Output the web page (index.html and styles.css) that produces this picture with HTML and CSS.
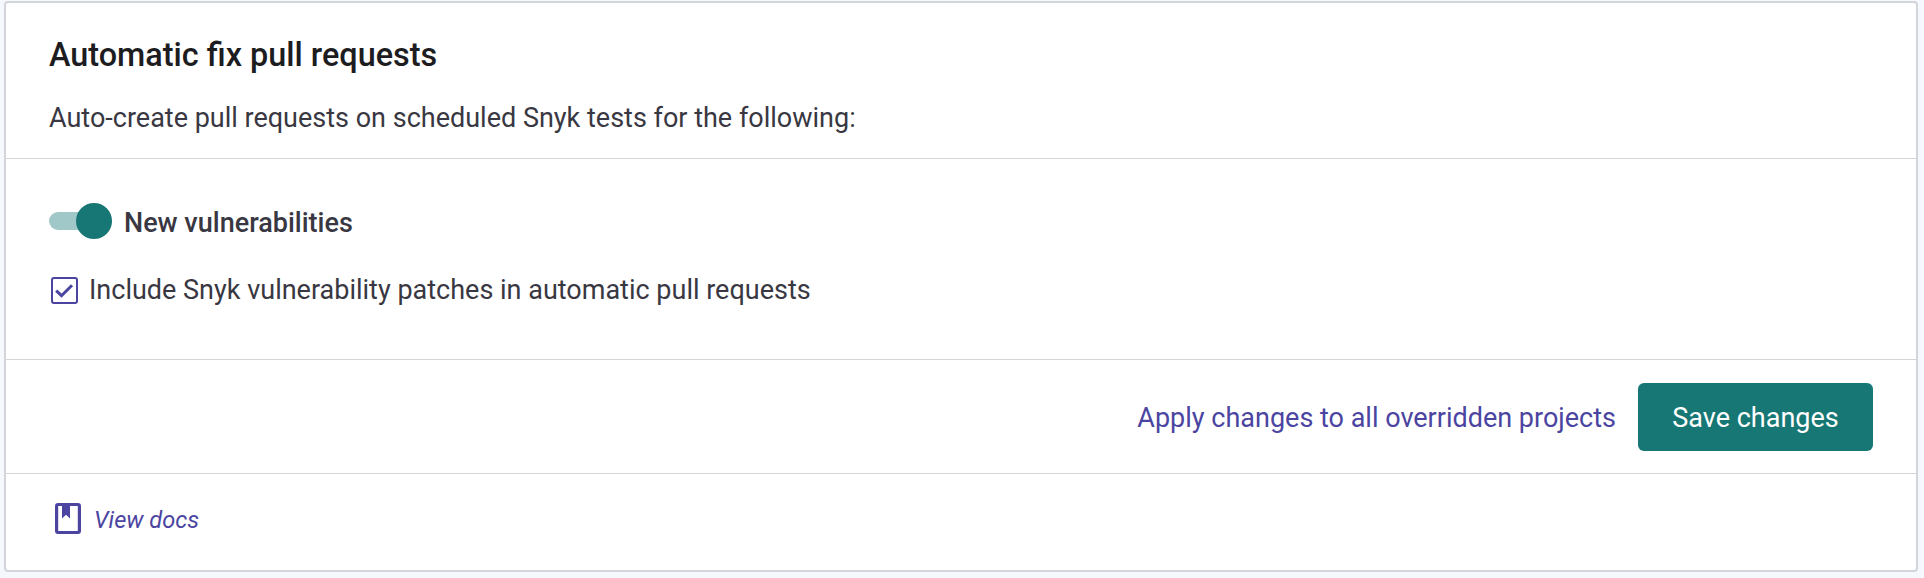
FILE: index.html
```html
<!DOCTYPE html>
<html lang="en">
<head>
<meta charset="utf-8">
<title>Automatic fix pull requests</title>
<link rel="stylesheet" href="styles.css">
</head>
<body>
<section class="card">
  <header class="card-header">
    <h2 class="title">Automatic fix pull requests</h2>
    <p class="description">Auto-create pull requests on scheduled Snyk tests for the following:</p>
  </header>
  <div class="card-body">
    <div class="toggle-row">
      <span class="toggle" role="switch" aria-checked="true" aria-label="New vulnerabilities"><span class="knob"></span></span>
      <span class="toggle-label">New vulnerabilities</span>
    </div>
    <div class="check-row">
      <svg class="checkbox" viewBox="0 0 27 27"><rect x="1" y="1" width="25" height="25" rx="2" fill="none" stroke="#4b45a1" stroke-width="2"/><path d="M5.2 13.6l5.3 5.1L21 8.3" fill="none" stroke="#4b45a1" stroke-width="3"/></svg>
      <span class="check-label">Include Snyk vulnerability patches in automatic pull requests</span>
    </div>
  </div>
  <div class="card-actions">
    <a class="link">Apply changes to all overridden projects</a>
    <button class="button" type="button">Save changes</button>
  </div>
  <footer class="card-footer">
    <svg class="book" viewBox="0 0 26 31"><path fill="#4b45a1" fill-rule="evenodd" d="M3 0h20a3 3 0 0 1 3 3v25a3 3 0 0 1-3 3H3a3 3 0 0 1-3-3V3a3 3 0 0 1 3-3zM3.2 3v25h19.6V3H15v12.5l-4-3.8-4 3.8V3z"/></svg>
    <a class="docs">View docs</a>
  </footer>
</section>
</body>
</html>
```
FILE: styles.css
```css
* { box-sizing: border-box; }
body {
  margin: 0;
  height: 578px;
  padding: 1px 6px 5px 4px;
  background: #f5f9fd;
  font-family: Roboto, "Liberation Sans", sans-serif;
  font-size: 27px;
  line-height: 40px;
  color: #393842;
}
.card {
  height: 571px;
  border: 2px solid #d3d5db;
  border-radius: 4px;
  background: #fff;
}
.card-header {
  height: 156px;
  padding: 32px 43px 0;
  border-bottom: 1px solid #d3d4da;
}
.title { margin: 0 0 23px; font-size: 32.4px; font-weight: 500; color: #1c1c21; }
.description { margin: 0; }
.card-body {
  height: 201px;
  padding: 44px 43px 0;
  border-bottom: 1px solid #d3d4d6;
}
.toggle-row { display: flex; align-items: center; height: 36px; }
.toggle {
  display: flex;
  align-items: center;
  justify-content: flex-end;
  width: 63px;
  height: 18px;
  border-radius: 9px;
  background: #a1c8c8;
}
.knob { width: 36px; height: 36px; border-radius: 50%; background: #177775; }
.toggle-label { margin: 3px 0 0 12px; font-weight: 500; }
.check-row { display: flex; align-items: center; margin: 31px 0 0 2px; }
.checkbox { width: 27px; height: 27px; }
.check-label { margin-left: 11px; }
.card-actions {
  display: flex;
  align-items: center;
  justify-content: flex-end;
  gap: 22px;
  height: 114px;
  padding-right: 43px;
  border-bottom: 1px solid #d3d4d6;
}
.link, .docs { color: #4b45a1; }
.link { padding-top: 2px; }
.button {
  width: 235px;
  height: 68px;
  padding: 2px 0 0;
  border: 0;
  border-radius: 6px;
  background: #177775;
  color: #fff;
  font: inherit;
}
.card-footer { display: flex; align-items: center; height: 88px; padding-left: 49px; }
.book { width: 26px; height: 31px; }
.docs { margin-left: 13px; padding-top: 4px; font-size: 23.6px; font-style: italic; }
```
